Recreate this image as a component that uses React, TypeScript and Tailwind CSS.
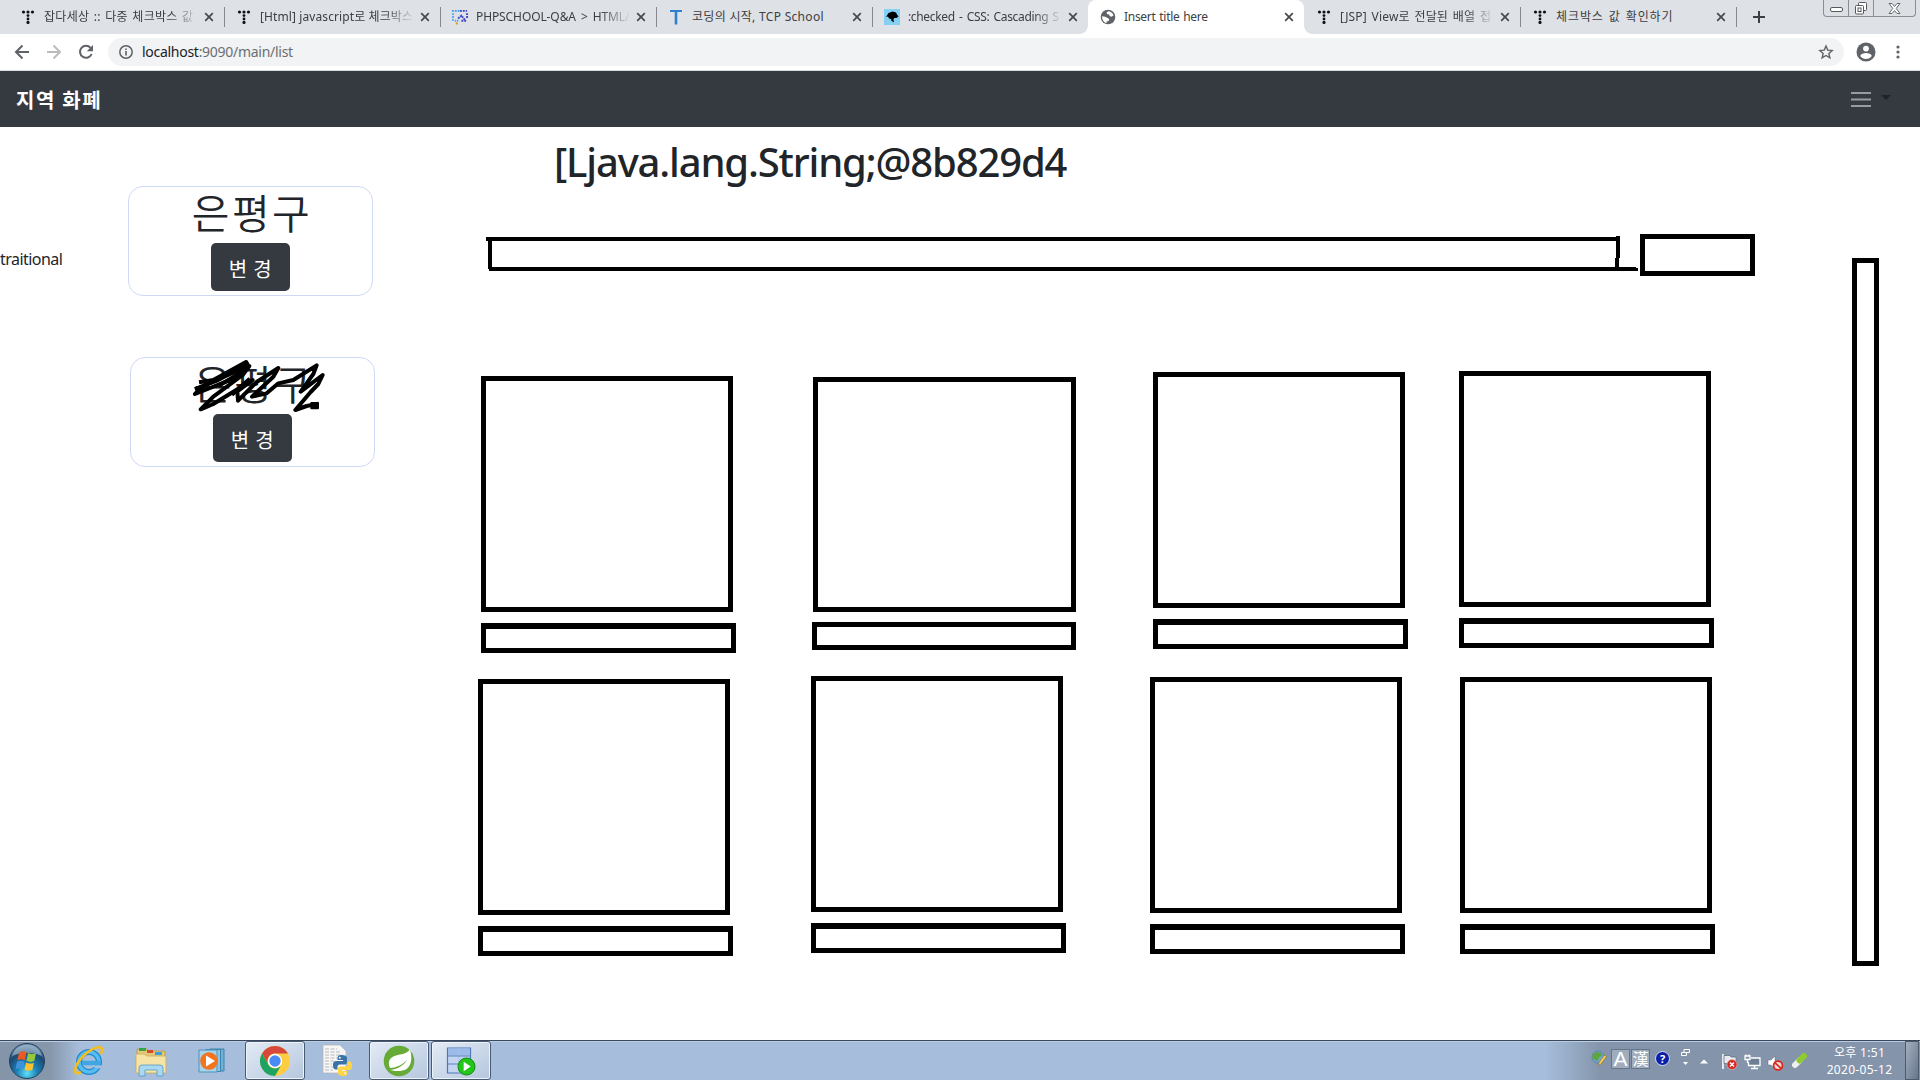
import React from "react";

const UI = "font-['Noto_Sans','Noto_Sans_CJK_KR',sans-serif]";

function TistoryIcon() {
  return (
    <svg width="16" height="16" viewBox="0 0 16 16" fill="#111">
      <circle cx="3.5" cy="3" r="1.6" />
      <circle cx="8" cy="3" r="1.6" />
      <circle cx="12.5" cy="3" r="1.6" />
      <circle cx="8" cy="6.6" r="1.4" />
      <circle cx="8" cy="10" r="1.4" />
      <circle cx="8" cy="13.4" r="1.6" />
    </svg>
  );
}

function PhpSchoolIcon() {
  return (
    <svg width="17" height="16" viewBox="0 0 17 16" fill="none">
      <path d="M0 1.500h8" stroke="#3f9df0" strokeWidth="2" strokeDasharray="2 1" />
      <path d="M1 4v9" stroke="#55a8ee" strokeWidth="2" strokeDasharray="2 1" />
      <path d="M8.500 1.500H16M16 4v6" stroke="#3b47c8" strokeWidth="2" strokeDasharray="2 1" />
      <path d="M3 12h4" stroke="#55a8ee" strokeWidth="2" strokeDasharray="1.500 .8" />
      <path d="M6.500 9.500l3.500-3 2 2.500 2 2.500" stroke="#3b47c8" strokeWidth="2" strokeDasharray="2 .8" />
      <path d="M10 12h6" stroke="#3b47c8" strokeWidth="2" strokeDasharray="2 1" />
      <rect x="4" y="13.800" width="2.2" height="2.2" fill="#e59a2c" />
    </svg>
  );
}

function TcpIcon() {
  return (
    <svg width="16" height="16" viewBox="0 0 16 16">
      <path d="M2 1h12v2H9.300V15.500H6.700V3H2z" fill="#2f7fd0" />
    </svg>
  );
}

function MdnIcon() {
  return (
    <svg width="16" height="16" viewBox="0 0 16 16">
      <rect width="16" height="16" fill="#83d0f2" />
      <path d="M2 8l2.500-4 4-1.500L12 3.500l1 2 1.500 2-2 1.500H10l-.500 2 .500 2.200-2.500-1.200L7 10l-2-.500-1-2z" fill="#000" />
    </svg>
  );
}

function GlobeIcon() {
  return (
    <svg width="16" height="16" viewBox="0 0 16 16">
      <circle cx="8" cy="8" r="7.300" fill="#5f6368" />
      <path d="M8.200 2.200c2.200 0 4.800 1.600 5.300 4.300l-2.200 1.300-1.700-.8-.4-1.600-1.800-.2-1-1.400z" fill="#fff" />
      <path d="M2 7.300l3.300.4 2.200 1.300 1.800 1-.6 2-2 .6-.4 1.600C3.800 13.500 1.900 11 2 7.300z" fill="#fff" />
    </svg>
  );
}

function CloseX() {
  return (
    <svg width="10" height="10" viewBox="0 0 10 10" className="shrink-0" stroke="#45494d" strokeWidth="1.700">
      <path d="M1.200 1.200l7.600 7.600M8.800 1.200L1.200 8.800" />
    </svg>
  );
}

type TabData = { icon: React.ReactNode; label: string; active?: boolean; divider?: boolean; fade?: boolean; spacing: string };

const tabs: TabData[] = [
  { icon: <TistoryIcon />, label: "잡다세상 :: 다중 체크박스 값", divider: true, fade: true, spacing: "tracking-[0.3px] [word-spacing:1px]" },
  { icon: <TistoryIcon />, label: "[Html] javascript로 체크박스", divider: true, fade: true, spacing: "tracking-[0.1px]" },
  { icon: <PhpSchoolIcon />, label: "PHPSCHOOL-Q&A > HTML/", divider: true, fade: true, spacing: "tracking-[-0.1px] [word-spacing:2px]" },
  { icon: <TcpIcon />, label: "코딩의 시작, TCP School", divider: true, spacing: "tracking-[0.3px]" },
  { icon: <MdnIcon />, label: ":checked - CSS: Cascading S", fade: true, spacing: "tracking-[-0.35px] [word-spacing:1.5px]" },
  { icon: <GlobeIcon />, label: "Insert title here", active: true, spacing: "tracking-[-0.3px] [word-spacing:1px]" },
  { icon: <TistoryIcon />, label: "[JSP] View로 전달된 배열 접", divider: true, fade: true, spacing: "tracking-[0.15px] [word-spacing:1.5px]" },
  { icon: <TistoryIcon />, label: "체크박스 값 확인하기", divider: true, spacing: "tracking-[0.9px] [word-spacing:1px]" },
];

function Tab({ t }: { t: TabData }) {
  return (
    <div className={"relative flex h-[34px] w-[216px] shrink-0 items-center pl-3 " + (t.active ? "rounded-t-lg bg-white" : "")}>
      {t.active && (
        <>
          <span className="absolute bottom-0 -left-2 size-2 bg-[radial-gradient(circle_at_0_0,#dee1e6_7.5px,#fff_8px)]" />
          <span className="absolute -right-2 bottom-0 size-2 bg-[radial-gradient(circle_at_100%_0,#dee1e6_7.5px,#fff_8px)]" />
        </>
      )}
      <span className="flex w-4 shrink-0 justify-center">{t.icon}</span>
      <span
        className={
          "ml-2 w-[153px] text-[12px] leading-[18px] whitespace-nowrap text-[#3c4043] " +
          t.spacing +
          (t.fade ? " [mask-image:linear-gradient(to_right,#000_125px,transparent_155px)]" : "")
        }
      >
        {t.label}
      </span>
      <span className="ml-[7px]">
        <CloseX />
      </span>
      {t.divider && <span className="absolute top-[7px] -right-px h-5 w-px bg-[#85898d]" />}
    </div>
  );
}

function WindowControls() {
  return (
    <div className="mr-1 ml-auto flex h-[17px] w-[93px] rounded-b-[4px] border border-t-0 border-[#8a8e94] bg-[#dcdfe4]">
      <div className="flex w-[25px] items-center justify-center border-r border-[#8a8e94]">
        <svg width="13" height="6" viewBox="0 0 13 6" className="mt-1">
          <rect x=".5" y=".5" width="12" height="4" rx="1.500" fill="#fff" stroke="#55585c" />
        </svg>
      </div>
      <div className="flex w-[25px] items-center justify-center border-r border-[#8a8e94]">
        <svg width="14" height="13" viewBox="0 0 14 13" fill="#fff" stroke="#55585c">
          <rect x="4.500" y=".5" width="8" height="8" rx="1" />
          <rect x="1.500" y="3.500" width="8" height="8.500" rx="1" />
          <rect x="4" y="6" width="3" height="3.500" />
        </svg>
      </div>
      <div className="flex flex-1 items-center justify-center">
        <svg width="13" height="11" viewBox="0 0 13 11">
          <path d="M1 .5h3l2.500 3L9 .5h3L8.200 5.400 12 10.500H9L6.500 7.500 4 10.500H1L4.800 5.400z" fill="#fff" stroke="#66696d" />
        </svg>
      </div>
    </div>
  );
}

function Toolbar() {
  return (
    <div className="flex h-9 items-center bg-white pl-[14px]">
      <svg width="16" height="16" viewBox="0 0 16 16" fill="none" stroke="#5f6368" strokeWidth="2">
        <path d="M15 8H2.500M8.500 1.500L2 8l6.500 6.500" />
      </svg>
      <svg width="16" height="16" viewBox="0 0 16 16" fill="none" stroke="#babcbe" strokeWidth="2" className="ml-4">
        <path d="M1 8h12.500M7.500 1.500L14 8l-6.500 6.500" />
      </svg>
      <svg width="16" height="16" viewBox="0 0 16 16" className="ml-4">
        <path d="M13.600 10A6 6 0 1 1 12.600 3.900" fill="none" stroke="#5f6368" strokeWidth="2" />
        <path d="M15 1v6.200H8.800z" fill="#5f6368" />
      </svg>
      <div className="ml-[14px] flex h-7 w-[1736px] items-center rounded-full bg-[#f1f3f4] pl-[11px]">
        <svg width="14" height="14" viewBox="0 0 14 14" fill="none" stroke="#5f6368" strokeWidth="1.500">
          <circle cx="7" cy="7" r="6.200" />
          <path d="M7 6v4.400M7 3.400v1.500" strokeWidth="1.600" />
        </svg>
        <span className="ml-[9px] text-[14px] leading-5 tracking-[-0.28px] text-[#6b6f73]">
          <span className="text-[#202124]">localhost</span>:9090/main/list
        </span>
        <svg width="16" height="16" viewBox="0 0 16 16" className="mr-[10px] ml-auto" fill="none" stroke="#5f6368" strokeWidth="1.400">
          <path d="M8 2l1.750 4.100 4.450.4-3.350 2.950 1 4.350L8 11.500l-3.850 2.300 1-4.350L1.800 6.500l4.450-.4z" />
        </svg>
      </div>
      <svg width="20" height="20" viewBox="0 0 20 20" className="ml-3">
        <circle cx="10" cy="10" r="9.500" fill="#5f6368" />
        <circle cx="10" cy="6.600" r="2.900" fill="#fff" />
        <path d="M4.200 14c.6-2.200 3.600-3 5.800-3s5.200.8 5.800 3c-1.300 1.900-3.500 3-5.800 3s-4.500-1.100-5.800-3z" fill="#fff" />
      </svg>
      <svg width="4" height="14" viewBox="0 0 4 14" className="ml-5" fill="#5f6368">
        <circle cx="2" cy="2" r="1.600" />
        <circle cx="2" cy="7" r="1.600" />
        <circle cx="2" cy="12" r="1.600" />
      </svg>
    </div>
  );
}

function RegionCard({ className, scribble }: { className: string; scribble?: boolean }) {
  return (
    <div className={"relative flex h-[110px] w-[245px] flex-col items-center rounded-[15px] border border-[#ced9f8] " + className}>
      <h1 className="mt-1 mb-2 h-11 pl-[3px] text-[41px] leading-[44px] font-[350] tracking-[2.4px] text-[#212529]">은평구</h1>
      <button className="h-12 w-[79px] rounded-[5px] bg-[#343a40] pt-[5px] text-[20px] leading-[30px] tracking-[0.5px] text-white">변 경</button>
      {scribble && (
        <svg
          width="136"
          height="56"
          viewBox="573 681 408 168"
          className="absolute -top-px left-[60px]"
          fill="none"
          stroke="#000"
          strokeWidth="12"
          strokeLinejoin="round"
          strokeLinecap="square"
        >
          <path d="M603 756L640 750 738 696 745 708 610 768 585 792 695 748 748 708 728 735 640 800 602 838 640 822 758 750 712 784 714 812 770 756 835 714 820 740 756 800 800 790 835 760 880 750 950 706 940 732 902 785 968 735 955 762 932 786 886 840 920 828 950 822" />
          <path d="M590 775L650 752 740 700M700 790L745 750M660 765L735 720" />
          <rect x="934" y="819" width="20" height="16" fill="#000" strokeWidth="6" />
        </svg>
      )}
    </div>
  );
}

type Cell = { col: string; box: string; bar: string };

const firstRow: Cell[] = [
  { col: "w-[255px] mt-[5px]", box: "w-[252px] h-[236px]", bar: "mt-[11px] h-[30px] border-t-[6px]" },
  { col: "w-[264px] mt-[6px] ml-[76px]", box: "w-[263px] h-[235px] ml-px", bar: "mt-[10px] h-[28px] border-t-[5px]" },
  { col: "w-[255px] mt-px ml-[77px]", box: "w-[252px] h-[236px]", bar: "mt-[11px] h-[30px] border-t-[6px]" },
  { col: "w-[255px] ml-[51px]", box: "w-[252px] h-[236px]", bar: "mt-[11px] h-[30px] border-t-[6px]" },
];

const secondRow: Cell[] = [
  { col: "w-[255px] mt-[3px]", box: "w-[252px] h-[236px]", bar: "mt-[11px] h-[30px] border-t-[6px]" },
  { col: "w-[255px] ml-[78px]", box: "w-[252px] h-[236px]", bar: "mt-[11px] h-[30px] border-t-[6px]" },
  { col: "w-[255px] mt-px ml-[84px]", box: "w-[252px] h-[236px]", bar: "mt-[11px] h-[30px] border-t-[6px]" },
  { col: "w-[255px] mt-px ml-[55px]", box: "w-[252px] h-[236px]", bar: "mt-[11px] h-[30px] border-t-[6px]" },
];

function CellRow({ cells, className }: { cells: Cell[]; className: string }) {
  return (
    <div className={"flex items-start " + className}>
      {cells.map((c, i) => (
        <div key={i} className={"shrink-0 " + c.col}>
          <div className={"border-5 border-black " + c.box} />
          <div className={"border-5 border-black " + c.bar} />
        </div>
      ))}
    </div>
  );
}

function Page() {
  return (
    <main className="flex h-[913px] items-start bg-white">
      <aside className="flex w-[128px] shrink-0 pt-[120px]">
        <p className="text-[16px] leading-6 tracking-[-0.55px] text-[#212529]">traitional</p>
      </aside>
      <section className="w-[247px] shrink-0 pt-[59px]">
        <RegionCard className="" />
        <RegionCard className="mt-[61px] ml-[2px]" scribble />
      </section>
      <section className="w-[1477px] shrink-0">
        <h1 className="mt-[11px] ml-[179px] h-12 text-[40px] leading-[48px] font-[550] tracking-[-1.15px] whitespace-nowrap text-[#212529]">
          [Ljava.lang.String;@8b829d4
        </h1>
        <div className="mt-[48px] ml-[110px] flex h-[42px] items-start">
          <svg width="1155" height="42" viewBox="0 0 1155 42" className="shrink-0" fill="#000">
            <rect x="1" y="3" width="1131" height="4" />
            <rect x="3" y="5" width="4" height="30" />
            <rect x="4" y="33" width="1147" height="4" />
            <rect x="1131" y="2" width="4" height="22" />
            <rect x="1130" y="24" width="4" height="10" />
            <rect x="1140" y="34" width="13" height="3" />
          </svg>
          <div className="h-[42px] w-[115px] shrink-0 border-5 border-black" />
        </div>
        <CellRow cells={firstRow} className="mt-[95px] ml-[106px] h-[282px]" />
        <CellRow cells={secondRow} className="mt-[23px] ml-[103px]" />
      </section>
      <div className="mt-[131px] h-[708px] w-[27px] shrink-0 border-5 border-black" />
    </main>
  );
}

function StartOrb() {
  return (
    <svg width="38" height="38" viewBox="0 0 38 38">
      <defs>
        <radialGradient id="orb" cx=".5" cy=".85" r=".85">
          <stop offset="0" stopColor="#5fe0f5" />
          <stop offset=".35" stopColor="#1b7fb5" />
          <stop offset=".7" stopColor="#1c4a72" />
          <stop offset="1" stopColor="#7a9cba" />
        </radialGradient>
      </defs>
      <circle cx="19" cy="19" r="17.500" fill="url(#orb)" stroke="#24405c" />
      <path d="M4 14C7 5 13 3 19 3s12 2 15 11c-7-4-22-4-30 0z" fill="#c4d5e4" opacity=".5" />
      <path d="M11 10.500c3-1.800 5-1.500 7.500-.2l-1.600 8c-2.500-1.300-4.800-1.400-7.500-.1z" fill="#ec5a24" />
      <path d="M20 11c2.500 1.300 5 1.500 8 .3l-1.700 7.800c-2.800 1.200-5.200 1-7.800-.3z" fill="#96c83c" />
      <path d="M9 19.700c2.700-1.300 5-1.100 7.500.1L15 27.300c-2.500-1.300-4.800-1.200-7.500 0z" fill="#3c93dc" />
      <path d="M18 20.500c2.600 1.300 5 1.400 7.900.2L24.300 28c-2.800 1.200-5.200 1-7.800-.3z" fill="#fdc32e" />
    </svg>
  );
}

function IeIcon() {
  return (
    <svg width="32" height="32" viewBox="0 0 32 32" fill="none">
      <circle cx="16" cy="17" r="10" stroke="#1f87cf" strokeWidth="6" />
      <circle cx="16" cy="17" r="10" stroke="#55bdf0" strokeWidth="3.500" />
      <path d="M9 18h18" stroke="#3ea6e4" strokeWidth="4.500" />
      <path d="M20 20.500h10v3l-8-.5z" fill="#a6bfdc" />
      <path d="M28 9c2-5 1-7.500-3-6.800C17 3.500 5 14 2.500 23c-1.300 5 1 6.500 5.500 4" stroke="#f5be1c" strokeWidth="2.600" />
    </svg>
  );
}

function ExplorerIcon() {
  return (
    <svg width="32" height="32" viewBox="0 0 32 32">
      <path d="M2 4h10l2 2h16v20H2z" fill="#e3c878" stroke="#b8974a" strokeWidth=".8" />
      <path d="M4 3h7v3H4z" fill="#35a34a" />
      <path d="M12 5h6v3h-6z" fill="#d8492c" />
      <path d="M20 7h7v3h-7z" fill="#3ba0d8" />
      <path d="M1 9h8l3 2h19v17H1z" fill="#f6e4a6" stroke="#c9aa5c" strokeWidth=".8" />
      <path d="M4 31v-8q0-3 3-3h18q3 0 3 3v8h-6v-6H10v6z" fill="#a9d8f2" stroke="#5599c4" strokeWidth=".8" />
    </svg>
  );
}

function MediaIcon() {
  return (
    <svg width="30" height="28" viewBox="0 0 30 28">
      <path d="M12 2h14v22H12z" fill="#6fb0d4" stroke="#3a84ae" />
      <path d="M8 2.500h14.500v22H8z" fill="#8fc5e2" stroke="#3a84ae" />
      <path d="M1 3h18v22H1z" fill="#a8d3ea" stroke="#4b93bb" />
      <circle cx="11" cy="14" r="8.800" fill="#f2741f" />
      <path d="M8 8.500v11l9-5.500z" fill="#fff" />
    </svg>
  );
}

function ChromeIcon() {
  return (
    <svg width="32" height="32" viewBox="0 0 32 32">
      <circle cx="16" cy="16" r="15" fill="#ffcd40" />
      <path d="M3 8.500A15 15 0 0 1 29 8.500H16a7.500 7.500 0 0 0-6.500 11.250z" fill="#d6483a" />
      <path d="M3 8.500l6.500 11.250A7.500 7.500 0 0 0 16 23.500 7.500 7.500 0 0 0 22.500 19.750L16 31A15 15 0 0 1 3 8.500z" fill="#1da462" />
      <circle cx="16" cy="16" r="7.200" fill="#fff" />
      <circle cx="16" cy="16" r="5.700" fill="#4a8af4" />
    </svg>
  );
}

function PythonIcon() {
  return (
    <svg width="32" height="32" viewBox="0 0 32 32">
      <path d="M2 1h17l6 6v22H2z" fill="#f6f6f6" stroke="#b3b3b3" strokeWidth=".7" />
      <path d="M4 5h12M4 8h15M4 11h17M4 14h12M4 17h9M4 20h7M4 23h8M4 26h8" stroke="#b9b9b9" strokeDasharray="4 1.500" />
      <path d="M21 11c-4 0-4.500 1.500-4.500 3v2H22v1h-7c-3 0-3 3-3 4.500s.5 4 3 4h1.500v-2.500q0-2.500 2.500-2.500h5q2 0 2-2.500V14c0-2-2-3-5-3z" fill="#3a73a8" />
      <path d="M22 32c4 0 4.500-1.500 4.500-3v-2H21v-1h7c3 0 3-3 3-4.500s-.5-4-3-4h-1.500V20q0 2.500-2.500 2.500h-5q-2 0-2 2.500v4c0 2 2 3 5 3z" fill="#ffd445" />
      <circle cx="18.800" cy="13.700" r="1" fill="#fff" />
      <circle cx="24.200" cy="29.200" r="1" fill="#fff" />
    </svg>
  );
}

function SpringIcon() {
  return (
    <svg width="32" height="32" viewBox="0 0 32 32">
      <circle cx="16" cy="16" r="15.300" fill="#66ab38" />
      <path d="M27 4.500c2.500 8 1.500 16-3.500 19.500C19 27 11 26 7 25c5-.5 13-3 17-10-6 6-11 7.500-17 8-3-6 0-11 6-12.500C18 9 23.500 9 27 4.500z" fill="#fff" />
    </svg>
  );
}

function DbIcon() {
  return (
    <svg width="30" height="30" viewBox="0 0 30 30">
      <path d="M1.500 2h23v25h-23z" fill="#c3d5f0" stroke="#4d78b5" strokeWidth="1.200" />
      <path d="M2 2.500h22v7H2z" fill="#9dbbe8" />
      <path d="M13 2.500v24" stroke="#a9c1e4" strokeWidth="1" />
      <path d="M1.500 10h23M1.500 18h23" stroke="#5b84be" strokeWidth="1.100" />
      <circle cx="20.500" cy="20.500" r="8.500" fill="#23c71a" stroke="#12850f" />
      <path d="M17.700 15.800v9.400l7-4.700z" fill="#fff" />
    </svg>
  );
}

function TaskItem({ children, open }: { children: React.ReactNode; open?: boolean }) {
  return (
    <div
      className={
        "flex h-[39px] shrink-0 items-center justify-center " +
        (open
          ? "mx-px w-[60px] rounded-[3px] border border-[#4a5a70] bg-linear-to-br from-[#e3ebf5] to-[#b5c7de] shadow-[inset_0_0_0_1px_#edf3fa]"
          : "w-[62px]")
      }
    >
      {children}
    </div>
  );
}

function Taskbar() {
  return (
    <footer className="flex h-10 items-start border-t border-[#39485c] bg-[linear-gradient(90deg,#8494a9_0,#8696ab_50px,#a6bedc_80px,#a6bedc_1545px,#8495ab_1600px,#8495ab_100%)] shadow-[inset_0_1px_0_#bccde2]">
      <div className="flex h-[39px] w-[58px] items-center pl-2">
        <StartOrb />
      </div>
      <TaskItem><IeIcon /></TaskItem>
      <TaskItem><ExplorerIcon /></TaskItem>
      <TaskItem><MediaIcon /></TaskItem>
      <TaskItem open><ChromeIcon /></TaskItem>
      <div className="flex w-[62px] justify-center pt-[3px]"><PythonIcon /></div>
      <TaskItem open><SpringIcon /></TaskItem>
      <TaskItem open><DbIcon /></TaskItem>
      <div className="ml-auto flex h-[39px] items-center">
        <svg width="16" height="18" viewBox="0 0 16 18" className="-mt-1">
          <circle cx="7" cy="7" r="6" fill="#6ea5d3" stroke="#48749c" strokeWidth=".6" />
          <path d="M2 4l4-2 4 1 1 3-3 1-1 4-3-1-3-3z" fill="#5fa53e" />
          <path d="M15.500 6.500L10 14l-2.500 1.500.5-3L13.500 5z" fill="#f9cf52" stroke="#7b5a20" strokeWidth=".5" />
        </svg>
        <span className="ml-[4px] -mt-1 flex h-5 w-[19px] items-center justify-center border border-[#66758a] bg-[#a0adbd] font-['Liberation_Sans',sans-serif] text-[21px] leading-5 text-white">A</span>
        <span className="ml-px -mt-1 flex h-5 w-[19px] items-center justify-center border border-[#66758a] bg-[#a0adbd] text-[16px] leading-5 text-white">漢</span>
        <span className="ml-[5px] -mt-1 flex size-[15px] items-center justify-center rounded-full border border-[#d9e2f2] bg-[#0c1fa8] text-[11px] leading-none font-bold text-white">?</span>
        <svg width="9" height="18" viewBox="0 0 9 18" className="-mt-2 ml-[11px]" fill="none" stroke="#fff">
          <path d="M3 1.500h5.500v3H3zM.5 4.500h5v3h-5z" />
          <path d="M2 14h5l-2.500 3z" fill="#fff" stroke="none" />
        </svg>
        <svg width="8" height="5" viewBox="0 0 8 5" className="mt-[2px] ml-[10px]">
          <path d="M0 4.500L4 .5l4 4z" fill="#fff" />
        </svg>
        <svg width="17" height="17" viewBox="0 0 17 17" className="mt-0.5 ml-[13px]">
          <path d="M2 1v15" stroke="#fff" strokeWidth="1.600" />
          <path d="M3 2.500h6l1 1.500h5v8H9L8 10.500H3z" fill="#e8ebef" stroke="#5a6572" strokeWidth=".7" />
          <circle cx="11" cy="11.500" r="5" fill="#d42a22" stroke="#f1d0cd" strokeWidth=".5" />
          <path d="M9 9.500l4 4M13 9.500l-4 4" stroke="#fff" strokeWidth="1.400" />
        </svg>
        <svg width="17" height="16" viewBox="0 0 17 16" className="mt-0.5 ml-[6px]" fill="none" stroke="#fff" strokeWidth="1.300">
          <path d="M7 4h9v7.500H4.500V8" fill="#6e7f95" />
          <path d="M1 2h5v3.500H1zM2 .5V2M5 .5V2M3.500 5.500V9M7 14.500h7M10.500 11.500v3" />
        </svg>
        <svg width="17" height="16" viewBox="0 0 17 16" className="mt-1 ml-[6px]">
          <path d="M1 5h3l4-4v13l-4-4H1z" fill="#fff" stroke="#606d7d" strokeWidth=".5" />
          <circle cx="11" cy="10.500" r="4.400" fill="#f4dcda" stroke="#d8291f" strokeWidth="1.800" />
          <path d="M8 7.800l6 5.500" stroke="#d8291f" strokeWidth="1.700" />
        </svg>
        <svg width="17" height="17" viewBox="0 0 17 17" className="ml-[7px]">
          <path d="M4 13l4.500-4.500" stroke="#eef1ee" strokeWidth="6" strokeLinecap="round" />
          <path d="M8.500 8.500L13 4" stroke="#8ecb2e" strokeWidth="6" strokeLinecap="round" />
        </svg>
        <div className="ml-[9px] flex w-[85px] flex-col items-center text-[12px] leading-[17px] tracking-[0.3px] whitespace-nowrap text-white">
          <span>오후 1:51</span>
          <span>2020-05-12</span>
        </div>
        <div className="mr-px ml-[3px] h-[39px] w-[14px] border border-[#4d5b6d] bg-linear-to-br from-[#a5b0bf] to-[#66768b]" />
      </div>
    </footer>
  );
}

export default function App() {
  return (
    <div className={"flex h-[1080px] w-[1920px] flex-col overflow-hidden bg-white " + UI}>
      <header>
        <div className="flex h-[34px] items-start bg-[#dee1e6] pl-2">
          {tabs.map((t) => (
            <Tab key={t.label} t={t} />
          ))}
          <svg width="12" height="12" viewBox="0 0 12 12" className="mt-[11px] ml-[17px]" stroke="#3c4043" strokeWidth="2">
            <path d="M6 0v12M0 6h12" />
          </svg>
          <WindowControls />
        </div>
        <Toolbar />
        <div className="h-px bg-[#d8dbdf]" />
      </header>
      <nav className="flex h-14 shrink-0 items-center bg-[#343a40] pl-4">
        <span className="pt-[2px] font-['Noto_Sans_CJK_KR',sans-serif] text-[20px] leading-[30px] font-bold tracking-[1.6px] text-white">지역 화폐</span>
        <svg width="20" height="17" viewBox="0 0 20 17" className="mt-px ml-auto" stroke="#999c9f" strokeWidth="2">
          <path d="M0 2h20M0 8.500h20M0 15h20" />
        </svg>
        <svg width="10" height="5" viewBox="0 0 10 5" className="-mt-1 mr-[29px] ml-[10px]">
          <path d="M0 0h10L5 5z" fill="#1f2327" />
        </svg>
      </nav>
      <Page />
      <Taskbar />
    </div>
  );
}
